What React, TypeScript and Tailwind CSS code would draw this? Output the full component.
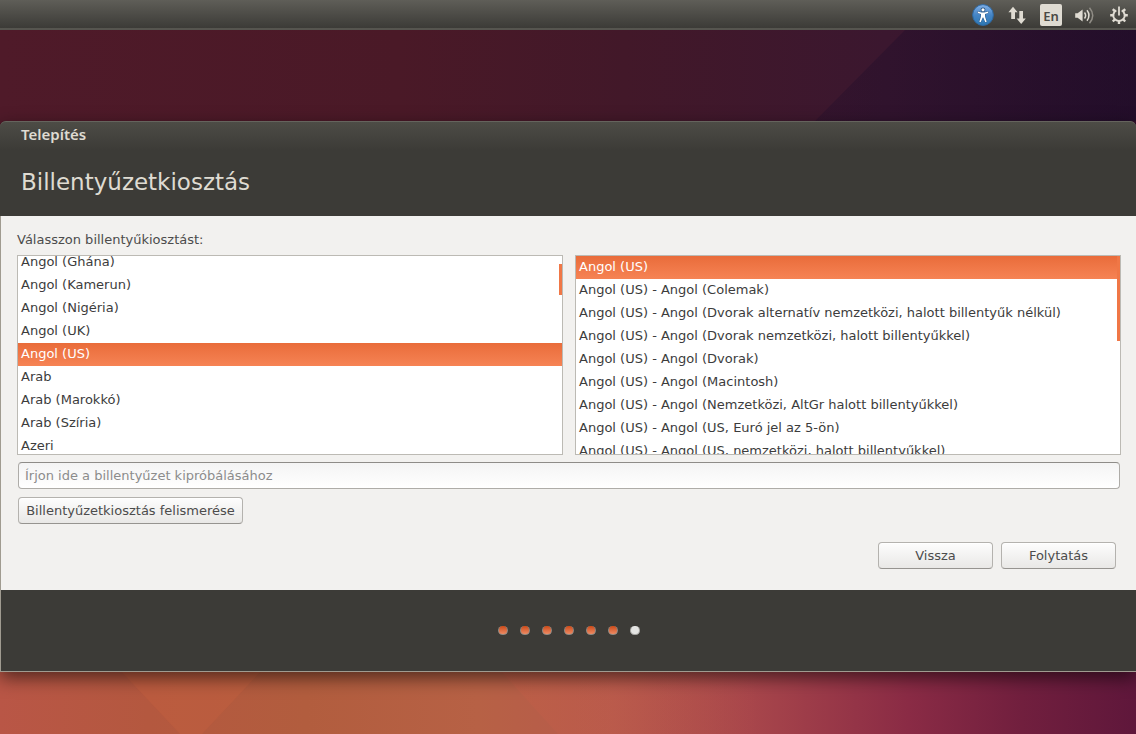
import React, { useState } from 'react';

const languages = [
  'Angol (Ghána)',
  'Angol (Kamerun)',
  'Angol (Nigéria)',
  'Angol (UK)',
  'Angol (US)',
  'Arab',
  'Arab (Marokkó)',
  'Arab (Szíria)',
  'Azeri',
];

const variants = [
  'Angol (US)',
  'Angol (US) - Angol (Colemak)',
  'Angol (US) - Angol (Dvorak alternatív nemzetközi, halott billentyűk nélkül)',
  'Angol (US) - Angol (Dvorak nemzetközi, halott billentyűkkel)',
  'Angol (US) - Angol (Dvorak)',
  'Angol (US) - Angol (Macintosh)',
  'Angol (US) - Angol (Nemzetközi, AltGr halott billentyűkkel)',
  'Angol (US) - Angol (US, Euró jel az 5-ön)',
  'Angol (US) - Angol (US, nemzetközi, halott billentyűkkel)',
];

const steps = [true, true, true, true, true, true, false];

const buttonClass =
  'h-[27px] rounded border border-[#b4b2ae] border-b-[#969490] bg-linear-to-b from-[#fdfdfd] to-[#e9e8e6] text-center leading-4 text-[#4c4c4c] shadow-[inset_0_1px_0_#ffffff]';

const Wallpaper = () => (
  <svg
    className="absolute inset-0 -z-10 h-full w-full"
    viewBox="0 0 1136 734"
    preserveAspectRatio="none"
    aria-hidden="true"
  >
    <defs>
      <linearGradient id="sky" x1="0" y1="0" x2="1" y2="0">
        <stop offset="0" stopColor="#4f1a29" />
        <stop offset="0.35" stopColor="#4a1927" />
        <stop offset="0.55" stopColor="#421829" />
        <stop offset="0.78" stopColor="#3b172f" />
        <stop offset="1" stopColor="#30112c" />
      </linearGradient>
      <linearGradient id="ground" x1="0" y1="0" x2="1" y2="0">
        <stop offset="0" stopColor="#b95646" />
        <stop offset="0.13" stopColor="#b4583f" />
        <stop offset="0.27" stopColor="#b25d3e" />
        <stop offset="0.42" stopColor="#b76145" />
        <stop offset="0.54" stopColor="#b75a4c" />
        <stop offset="0.66" stopColor="#a8464b" />
        <stop offset="0.8" stopColor="#8a2b45" />
        <stop offset="0.9" stopColor="#711f3e" />
        <stop offset="1" stopColor="#5f173b" />
      </linearGradient>
      <linearGradient id="dusk" x1="0" y1="0" x2="1" y2="0">
        <stop offset="0" stopColor="#1d0c2a" stopOpacity="0.3" />
        <stop offset="1" stopColor="#180b28" stopOpacity="0.55" />
      </linearGradient>
      <linearGradient id="ember" x1="0" y1="0" x2="1" y2="0">
        <stop offset="0" stopColor="#c95d48" stopOpacity="0.3" />
        <stop offset="1" stopColor="#c95d48" stopOpacity="0" />
      </linearGradient>
    </defs>
    <rect width="1136" height="400" fill="url(#sky)" />
    <rect y="400" width="1136" height="334" fill="url(#ground)" />
    <path d="M905 30H1136V121H815Z" fill="url(#dusk)" />
    <path d="M120 670H262L202 734H180Z" fill="#c9613f" fillOpacity="0.35" />
    <path d="M500 670H760V734H558Z" fill="url(#ember)" />
  </svg>
);

const AccessIcon = () => (
  <svg width="22" height="22" viewBox="0 0 22 22">
    <defs>
      <linearGradient id="ball" x1="0" y1="0" x2="0" y2="1">
        <stop offset="0" stopColor="#83b1e8" />
        <stop offset="0.5" stopColor="#4585c6" />
        <stop offset="1" stopColor="#2c78b4" />
      </linearGradient>
    </defs>
    <circle cx="11" cy="11" r="10.4" fill="url(#ball)" stroke="#2f69a3" />
    <circle cx="11" cy="5.8" r="2.4" fill="#27517d" />
    <circle cx="11" cy="5.8" r="1.6" fill="#fff" />
    <path
      d="M5.8 7.6 9.5 8.4H12.5L16.2 7.6V8.9L13 10V12.5L14.7 17.8 13.3 18.2 11.3 13.6H10.7L8.7 18.2 7.3 17.8 9 12.5V10L5.8 8.9Z"
      fill="#fff"
      stroke="#27517d"
      strokeWidth="0.8"
      paintOrder="stroke"
    />
  </svg>
);

const NetworkIcon = () => (
  <svg width="22" height="22" viewBox="0 0 22 22" fill="#dfdbd2">
    <path d="M7 2.8 11.6 8.3H9V15H5.2V8.3H2.4Z" />
    <path d="M13.3 7H17V14.5H19.8L15.2 20 10.6 14.5H13.3Z" />
  </svg>
);

const SoundIcon = () => (
  <svg width="22" height="22" viewBox="0 0 22 22" fill="none" stroke="#dfdbd2" strokeWidth="1.5">
    <path d="M1.2 9.3H3.6L8.6 5.6V17.4L3.6 13.7H1.2Z" fill="#dfdbd2" stroke="none" />
    <path d="M10.5 8.5Q12.8 11.5 10.5 14.5" />
    <path d="M13 6.3Q17 11.5 13 16.7" />
    <path d="M15.5 3.8Q22 11.5 15.5 19.2" stroke="#908d86" />
  </svg>
);

const SessionIcon = () => (
  <svg width="22" height="22" viewBox="0 0 22 22" fill="none" stroke="#dfdbd2">
    <path d="M8.3 6.3A5.7 5.7 0 1 0 13.7 6.3" strokeWidth="2" />
    <path d="M11 2.5V11.5" strokeWidth="1.8" />
    <path
      d="M16.5 11.3H19.8M5.5 11.3H2.2M11 16.8V20.1M14.9 15.2 17.2 17.5M7.1 15.2 4.8 17.5M14.9 7.4 17.2 5.1M7.1 7.4 4.8 5.1"
      strokeWidth="2.4"
    />
  </svg>
);

const Panel = () => (
  <header className="flex h-[30px] items-center justify-end gap-3 border-b-2 border-[#56554f] bg-linear-to-b from-[#5f5e58] to-[#3c3b37] pt-px pr-1.5">
    <button type="button" aria-label="Akadálymentesítés"><AccessIcon /></button>
    <button type="button" aria-label="Hálózat"><NetworkIcon /></button>
    <button
      type="button"
      className="h-[22px] w-[22px] rounded-xs bg-[#dfdbd2] pt-0.5 text-center font-['Noto_Sans','DejaVu_Sans',sans-serif] text-[13px] leading-4 font-semibold text-[#4a4944]"
    >
      En
    </button>
    <button type="button" aria-label="Hang"><SoundIcon /></button>
    <button type="button" aria-label="Munkamenet"><SessionIcon /></button>
  </header>
);

interface ListBoxProps {
  id: string;
  label?: string;
  items: string[];
  initial: string;
  listClass: string;
  thumbClass: string;
}

const ListBox = ({ id, label, items, initial, listClass, thumbClass }: ListBoxProps) => {
  const [value, setValue] = useState<string>(initial);

  return (
    <div className="relative h-[200px] min-w-0 flex-1 overflow-hidden border border-[#bcbab4] bg-white">
      <select
        id={id}
        aria-label={label}
        size={items.length}
        value={value}
        onChange={(e) => setValue(e.target.value)}
        className={`block h-[207px] w-full appearance-none overflow-hidden bg-white outline-none ${listClass}`}
      >
        {items.map((item) => (
          <option
            key={item}
            value={item}
            className="h-[23px] px-[3px] pt-[3px] pb-0 text-[#3c3c3c] checked:bg-linear-to-b checked:from-[#e96c3a] checked:to-[#f68354] checked:text-white"
          >
            {item}
          </option>
        ))}
      </select>
      <div className={`absolute right-0 w-[3px] bg-[#f07746] ${thumbClass}`} />
    </div>
  );
};

const App = () => {
  const [sample, setSample] = useState<string>('');

  return (
    <div className="relative isolate min-h-screen overflow-hidden font-['DejaVu_Sans',sans-serif] text-[13px] text-[#4c4c4c]">
      <Wallpaper />
      <Panel />

      <main className="mt-[91px] rounded-t-md border-b border-[#a09b90] bg-[#3c3b37] shadow-[0_6px_18px_rgba(0,0,0,0.55)]">
        <div className="flex h-[95px] flex-col rounded-t-md border-t border-[#65645d] bg-linear-to-b from-[#4d4c46] to-[#3c3b37] to-30% pl-[21px] text-[#dfdbd2]">
          <div className="h-[27px] font-['Noto_Sans','DejaVu_Sans',sans-serif] text-[15px] leading-6 font-semibold">Telepítés</div>
          <h1 className="text-[23px] leading-[66px]">Billentyűzetkiosztás</h1>
        </div>

        <form
          className="flex flex-col border-l border-[#a09b90] bg-[#f2f1ef] pt-4 pr-[15px] pb-[21px] pl-4"
          onSubmit={(e) => e.preventDefault()}
        >
          <label htmlFor="layout" className="leading-4">Válasszon billentyűkiosztást:</label>
          <div className="mt-[7px] flex gap-3">
            <ListBox
              id="layout"
              items={languages}
              initial="Angol (US)"
              listClass="-mt-[5px]"
              thumbClass="top-2 h-[31px]"
            />
            <ListBox
              id="variant"
              label="Változat"
              items={variants}
              initial="Angol (US)"
              listClass="mt-0"
              thumbClass="top-0 h-[85px]"
            />
          </div>
          <input
            type="text"
            aria-label="Írjon ide a billentyűzet kipróbálásához"
            placeholder="Írjon ide a billentyűzet kipróbálásához"
            value={sample}
            onChange={(e) => setSample(e.target.value)}
            className="mx-px mt-[7px] h-[27px] rounded border border-[#aeaca8] border-t-[#8e8c88] bg-linear-to-b from-[#f4f4f4] to-white px-1.5 leading-4 outline-none placeholder:text-[#8c8c8c]"
          />
          <button type="button" className={`mt-2 ml-px w-[225px] self-start ${buttonClass}`}>
            Billentyűzetkiosztás felismerése
          </button>
          <div className="mt-[18px] flex justify-end gap-2 pr-[5px]">
            <button type="button" className={`w-[115px] ${buttonClass}`}>Vissza</button>
            <button type="submit" className={`w-[115px] ${buttonClass}`}>Folytatás</button>
          </div>
        </form>

        <div className="flex h-[81px] items-center justify-center gap-3 border-l border-[#a09b90]">
          {steps.map((done, i) => (
            <span
              key={i}
              className={`h-[9px] w-2.5 rounded-full border border-t-0 ${
                done
                  ? 'border-[#8f8880] bg-linear-to-b from-[#cc4810] to-[#ec8a62]'
                  : 'border-[#a5a4a0] bg-[#e4e4e2]'
              }`}
            />
          ))}
        </div>
      </main>
    </div>
  );
};

export default App;
